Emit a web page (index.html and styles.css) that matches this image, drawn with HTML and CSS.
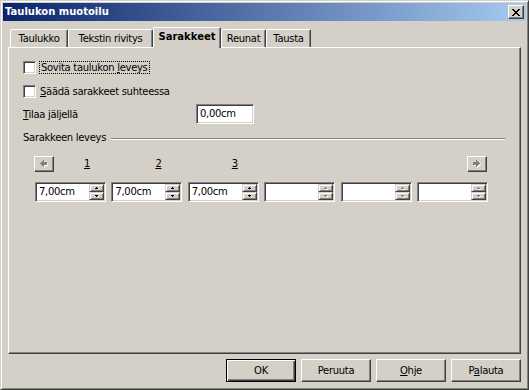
FILE: index.html
```html
<!DOCTYPE html>
<html lang="fi">
<head>
<meta charset="utf-8">
<title>Taulukon muotoilu</title>
<link rel="stylesheet" href="styles.css">
</head>
<body>
<div class="window">
  <div class="titlebar">
    <span class="title">Taulukon muotoilu</span>
    <span class="close">
      <svg width="8" height="7" viewBox="0 0 8 7" shape-rendering="crispEdges"><path fill="#000" d="M0 0h2v1H0zM6 0h2v1H6zM1 1h2v1H1zM5 1h2v1H5zM2 2h4v1H2zM3 3h2v1H3zM2 4h4v1H2zM1 5h2v1H1zM5 5h2v1H5zM0 6h2v1H0zM6 6h2v1H6z"/></svg>
    </span>
  </div>
  <div class="body">
    <div class="tabs">
      <div class="tab tab-w58">Taulukko</div>
      <div class="tab tab-w85">Tekstin rivitys</div>
      <div class="tab tab-w68 sel">Sarakkeet</div>
      <div class="tab tab-w45">Reunat</div>
      <div class="tab tab-w45">Tausta</div>
    </div>
    <div class="panel">
      <div class="check-row">
        <span class="checkbox"></span>
        <span class="focus">Sovita taulukon <u>l</u>eveys</span>
      </div>
      <div class="check-row">
        <span class="checkbox"></span>
        <span class="check-label"><u>S</u>äädä sarakkeet suhteessa</span>
      </div>
      <div class="field-row">
        <span class="field-label"><u>T</u>ilaa jäljellä</span>
        <span class="textbox">0,00cm</span>
      </div>
      <div class="group-head">
        <span>Sarakkeen leveys</span>
        <span class="rule"></span>
      </div>
      <div class="cols nav">
        <div class="cell-first">
          <span class="arrow-btn arrow-left">
            <svg width="8" height="8" viewBox="0 0 8 8" shape-rendering="crispEdges"><path fill="#fff" d="M4 1h1v1H4zM3 2h2v1H3zM2 3h6v1H2zM1 4h7v1H1zM2 5h6v1H2zM3 6h2v1H3zM4 7h1v1H4z"/><path fill="#808080" d="M3 0h1v1H3zM2 1h2v1H2zM1 2h6v1H1zM0 3h7v1H0zM1 4h6v1H1zM2 5h2v1H2zM3 6h1v1H3z"/></svg>
          </span>
          <u class="num-first">1</u>
        </div>
        <div class="num"><u>2</u></div>
        <div class="num"><u>3</u></div>
        <div></div>
        <div></div>
        <div class="cell-last">
          <span class="arrow-btn">
            <svg width="8" height="8" viewBox="0 0 8 8" shape-rendering="crispEdges"><path fill="#fff" d="M4 1h1v1H4zM4 2h2v1H4zM1 3h6v1H1zM1 4h7v1H1zM1 5h6v1H1zM4 6h2v1H4zM4 7h1v1H4z"/><path fill="#808080" d="M3 0h1v1H3zM3 1h2v1H3zM0 2h6v1H0zM0 3h7v1H0zM0 4h6v1H0zM3 5h2v1H3zM3 6h1v1H3z"/></svg>
          </span>
        </div>
      </div>
      <div class="cols fields">
        <div class="spin"><span class="spin-text">7,00cm</span><span class="spin-btns"><span class="sb up"></span><span class="sb down"></span></span></div>
        <div class="spin"><span class="spin-text">7,00cm</span><span class="spin-btns"><span class="sb up"></span><span class="sb down"></span></span></div>
        <div class="spin"><span class="spin-text">7,00cm</span><span class="spin-btns"><span class="sb up"></span><span class="sb down"></span></span></div>
        <div class="spin"><span class="spin-text"></span><span class="spin-btns"><span class="sb up off"></span><span class="sb down off"></span></span></div>
        <div class="spin"><span class="spin-text"></span><span class="spin-btns"><span class="sb up off"></span><span class="sb down off"></span></span></div>
        <div class="spin"><span class="spin-text"></span><span class="spin-btns"><span class="sb up off"></span><span class="sb down off"></span></span></div>
      </div>
    </div>
    <div class="buttons">
      <span class="btn btn-default">OK</span>
      <span class="btn">Peruuta</span>
      <span class="btn"><u>O</u>hje</span>
      <span class="btn">P<u>a</u>lauta</span>
    </div>
  </div>
</div>
</body>
</html>
```

FILE: styles.css
```css
html, body {
  margin: 0;
  padding: 0;
  width: 529px;
  height: 390px;
  overflow: hidden;
  background: #d4d0c8;
}

body {
  font-family: "DejaVu Sans", "Liberation Sans", sans-serif;
  font-size: 10px;
  letter-spacing: -0.3px;
  color: #000;
}

.window {
  width: 529px;
  height: 390px;
  box-sizing: border-box;
  border: 1px solid;
  border-color: #d4d0c8 #404040 #404040 #d4d0c8;
  box-shadow: inset 1px 1px #fff, inset -1px -1px #808080;
  padding: 2px;
  background: #d4d0c8;
  display: flex;
  flex-direction: column;
}

.titlebar {
  height: 18px;
  flex: none;
  display: flex;
  align-items: center;
  justify-content: space-between;
  padding: 0 2px;
  background: linear-gradient(to right, #0a246a, #a6caf0);
  color: #fff;
}

.title {
  font-weight: bold;
  letter-spacing: 0;
  line-height: 18px;
  white-space: nowrap;
}

.close {
  width: 16px;
  height: 14px;
  box-sizing: border-box;
  background: #d4d0c8;
  border: 1px solid;
  border-color: #fff #404040 #404040 #fff;
  box-shadow: inset -1px -1px #808080;
  display: flex;
  align-items: center;
  justify-content: center;
}

.close svg {
  display: block;
}

.body {
  padding: 6px 5px 0;
  display: flex;
  flex-direction: column;
}

.tabs {
  display: flex;
  align-items: flex-end;
  height: 20px;
  margin-left: 2px;
}

.tab {
  box-sizing: border-box;
  height: 18px;
  border: 1px solid;
  border-bottom: 0;
  border-color: #fff #404040 transparent #fff;
  border-radius: 2px 2px 0 0;
  box-shadow: inset -1px 0 #808080;
  background: #d4d0c8;
  text-align: center;
  line-height: 17px;
  white-space: nowrap;
}

.tab.sel {
  height: 21px;
  margin-bottom: -1px;
  position: relative;
  z-index: 1;
  font-weight: bold;
  letter-spacing: 0;
  line-height: 18px;
}

.tab-w58 { width: 58px; }
.tab-w85 { width: 85px; }
.tab-w68 { width: 68px; }
.tab-w45 { width: 45px; }

.panel {
  box-sizing: border-box;
  height: 307px;
  border: 1px solid;
  border-color: #fff #404040 #404040 #fff;
  box-shadow: inset -1px -1px #808080;
  padding: 11px 15px 0 14px;
}

.check-row {
  display: flex;
  align-items: center;
  height: 17px;
  line-height: 17px;
}

.check-row + .check-row {
  margin-top: 7px;
}

.checkbox {
  flex: none;
  width: 13px;
  height: 13px;
  box-sizing: border-box;
  border: 1px solid;
  border-color: #808080 #fff #fff #808080;
  box-shadow: inset 1px 1px #404040, inset -1px -1px #d4d0c8;
  background: #fff;
}

.focus {
  margin-left: 3px;
  padding: 0 1px;
  border: 1px dotted #000;
  line-height: 11px;
}

.check-label {
  margin-left: 4px;
}

.field-row {
  display: flex;
  align-items: center;
  height: 20px;
  margin-top: 4px;
}

.field-label {
  flex: none;
  width: 173px;
  line-height: 20px;
  padding-top: 1px;
}

.textbox {
  width: 58px;
  height: 20px;
  box-sizing: border-box;
  border: 1px solid;
  border-color: #808080 #fff #fff #808080;
  box-shadow: inset 1px 1px #404040, inset -1px -1px #d4d0c8;
  background: #fff;
  padding: 1px 1px 1px 3px;
  line-height: 16px;
}

.group-head {
  display: flex;
  align-items: center;
  height: 14px;
  margin-top: 7px;
  line-height: 14px;
}

.rule {
  flex: 1;
  height: 0;
  border-top: 1px solid #808080;
  border-bottom: 1px solid #fff;
  margin-left: 5px;
  margin-top: 2px;
}

.cols {
  display: grid;
  grid-template-columns: repeat(6, 71px);
  column-gap: 5.4px;
  margin-left: 12px;
}

.nav {
  margin-top: 11px;
  height: 16px;
  line-height: 16px;
}

.cell-first {
  display: flex;
  align-items: center;
}

.cell-last {
  display: flex;
  justify-content: flex-end;
  padding-right: 1px;
}

.arrow-btn {
  flex: none;
  width: 20px;
  height: 16px;
  box-sizing: border-box;
  border: 1px solid;
  border-color: #fff #404040 #404040 #fff;
  box-shadow: inset -1px -1px #808080;
  display: flex;
  align-items: center;
  justify-content: center;
}

.arrow-btn svg {
  display: block;
}

.arrow-left {
  margin-left: -1px;
}

.num-first {
  margin-left: 30px;
}

.num {
  padding-left: 44px;
}

.fields {
  margin-top: 10px;
}

.spin {
  display: flex;
  width: 71px;
  height: 20px;
  box-sizing: border-box;
  border: 1px solid;
  border-color: #808080 #fff #fff #808080;
  box-shadow: inset 1px 1px #404040, inset -1px -1px #d4d0c8;
  background: #fff;
  padding: 1px;
}

.spin-text {
  flex: 1;
  padding-left: 2px;
  line-height: 16px;
}

.spin-btns {
  flex: none;
  width: 15px;
  display: flex;
  flex-direction: column;
}

.sb {
  height: 8px;
  box-sizing: border-box;
  background: #d4d0c8;
  border: 1px solid;
  border-color: #d4d0c8 #404040 #404040 #d4d0c8;
  box-shadow: inset 1px 1px #fff, inset -1px -1px #808080;
  display: flex;
  align-items: center;
  justify-content: center;
}

.sb::after {
  content: "";
  width: 1px;
  height: 1px;
  background: #000;
}

.sb.up::after {
  margin-top: -1px;
  box-shadow: -1px 1px #000, 0 1px #000, 1px 1px #000;
}

.sb.down::after {
  margin-top: -1px;
  box-shadow: -1px -1px #000, 0 -1px #000, 1px -1px #000;
  transform: translateY(1px);
}

.sb.up.off::after {
  background: #808080;
  box-shadow: -1px 1px #808080, 0 1px #808080, 1px 1px #808080,
    1px 1px #fff, 0 2px #fff, 1px 2px #fff, 2px 2px #fff;
}

.sb.down.off::after {
  background: #808080;
  box-shadow: -1px -1px #808080, 0 -1px #808080, 1px -1px #808080,
    1px 1px #fff, 2px 0 #fff;
}

.buttons {
  display: flex;
  justify-content: flex-end;
  gap: 5px;
  margin-top: 5px;
}

.btn {
  width: 70px;
  height: 23px;
  box-sizing: border-box;
  border: 1px solid;
  border-color: #fff #404040 #404040 #fff;
  box-shadow: inset -1px -1px #808080;
  text-align: center;
  line-height: 21px;
}

.btn-default {
  border-color: #000;
  box-shadow: inset 1px 1px #fff, inset -1px -1px #404040, inset -2px -2px #808080;
}
```
